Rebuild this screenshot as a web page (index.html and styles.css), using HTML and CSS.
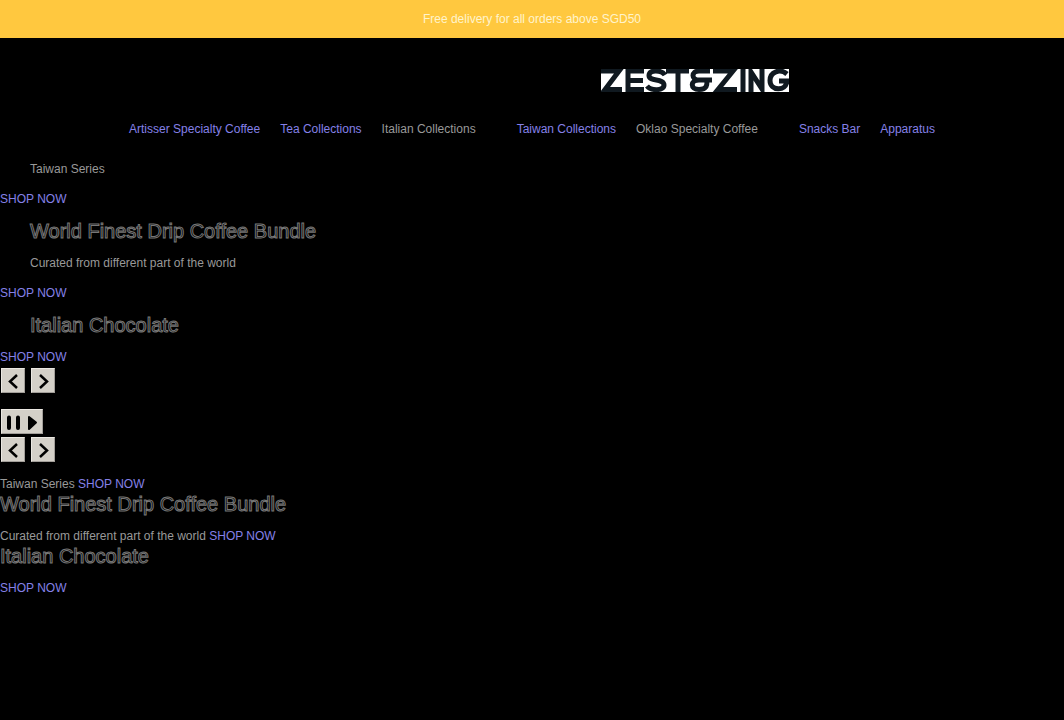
FILE: index.html
```html
<!DOCTYPE html>
<html lang="en">
<head>
<meta charset="utf-8">
<title>Zest &amp; Zing</title>
<link rel="stylesheet" href="styles.css">
</head>
<body>
<svg class="defs" aria-hidden="true">
  <symbol id="left" viewBox="0 0 20 20"><path d="M14 4L7 10.500L14 17" fill="none" stroke="#000" stroke-width="2.500"/></symbol>
  <symbol id="right" viewBox="0 0 20 20"><path d="M7 4L14 10.500L7 17" fill="none" stroke="#000" stroke-width="2.500"/></symbol>
</svg>
<p class="announcement">Free delivery for all orders above SGD50</p>
<header class="header">
  <a class="logo" href="#" aria-label="Zest&amp;Zing">
    <svg width="188" height="23" viewBox="0 0 188 23">
      <path fill="#fff" d="M0 0h188v23H0z"/>
      <g fill="none" stroke="#101920" stroke-width="5">
        <path d="M0 2H18L4 20.500H21M43 2H27V20.500H43M27 11.500H42"/>
        <path d="M64 6C61 1 48 0 48 6.500C48 13 63 9 63 16C63 22 50 22 46 17M65 2H88M77 2V23"/>
        <path d="M109 2H98C90 2 90 11 98 11H111M98 11C89 11 89 20.500 98 20.500C107 20.500 106 15 106 9M112 2H132L117 20.500H136"/>
        <path d="M142 0V23M150 23V3L161 20V0M186 5C179 -1 169 3 169 11.500C169 22 185 23 186 12H178"/>
      </g>
    </svg>
  </a>
  <nav class="nav">
    <a href="#">Artisser Specialty Coffee</a>
    <a href="#">Tea Collections</a>
    <span class="menu">Italian Collections</span>
    <a href="#">Taiwan Collections</a>
    <span class="menu">Oklao Specialty Coffee</span>
    <a href="#">Snacks Bar</a>
    <a href="#">Apparatus</a>
  </nav>
</header>
<main>
  <section class="slides">
    <p class="copy">Taiwan Series</p>
    <a href="#">SHOP NOW</a>
    <h2 class="title">World Finest Drip Coffee Bundle</h2>
    <p class="copy">Curated from different part of the world</p>
    <a href="#">SHOP NOW</a>
    <h2 class="title">Italian Chocolate</h2>
    <a href="#">SHOP NOW</a>
  </section>
  <div class="controls">
    <button aria-label="Previous"><svg class="icon"><use href="#left"/></svg></button>
    <button aria-label="Next"><svg class="icon"><use href="#right"/></svg></button>
  </div>
  <div class="controls playback">
    <button class="wide" aria-label="Pause or play"><svg width="36" height="20" viewBox="0 0 36 20"><path d="M5 5.500V16M14 5.500V16" stroke="#000" stroke-width="4" stroke-linecap="round"/><path d="M25 5L32 10.500L25 17Z" stroke="#000" stroke-width="2" stroke-linejoin="round"/></svg></button>
  </div>
  <div class="controls">
    <button aria-label="Previous"><svg class="icon"><use href="#left"/></svg></button>
    <button aria-label="Next"><svg class="icon"><use href="#right"/></svg></button>
  </div>
  <section class="summary">
    <p>Taiwan Series <a href="#">SHOP NOW</a></p>
    <h2>World Finest Drip Coffee Bundle</h2>
    <p>Curated from different part of the world <a href="#">SHOP NOW</a></p>
    <h2>Italian Chocolate</h2>
    <p><a href="#">SHOP NOW</a></p>
  </section>
</main>
</body>
</html>
```
FILE: styles.css
```css
body {
  margin: 0;
  background: #000;
  color: #999;
  font: 12px/18px "Liberation Sans", Arial, sans-serif;
}
p, h2 { margin: 0; }
a { color: #8580e8; text-decoration: none; }
.defs { position: absolute; width: 0; height: 0; }
.announcement {
  padding: 10px;
  background: #ffc83f;
  color: #fff4cc;
  text-align: center;
}
.logo { display: block; width: 188px; margin: 31px auto 28px; padding-left: 326px; }
.logo svg { display: block; }
.nav { display: flex; justify-content: center; gap: 20px; }
.menu { padding-right: 21px; }
h2 {
  color: #000;
  -webkit-text-stroke: 1px #777;
  font-size: 20px;
  font-weight: 400;
  line-height: 22px;
}
.slides { display: flex; flex-direction: column; align-items: flex-start; gap: 12px; padding-top: 22px; }
.slides .copy, .slides .title { padding-left: 30px; }
.controls { display: flex; gap: 6px; padding: 2px 0 1px 1px; }
button {
  display: grid;
  place-items: center;
  width: 24px;
  height: 25px;
  padding: 0;
  border: 1px solid #a29e99;
  border-top-color: #ebe8e2;
  border-left-color: #ebe8e2;
  background: #d4d0c8;
}
.icon { width: 20px; height: 20px; }
.wide { width: 42px; }
.playback { padding-top: 15px; }
.summary { padding-top: 12px; }
.summary h2 { margin-bottom: 12px; }
```
